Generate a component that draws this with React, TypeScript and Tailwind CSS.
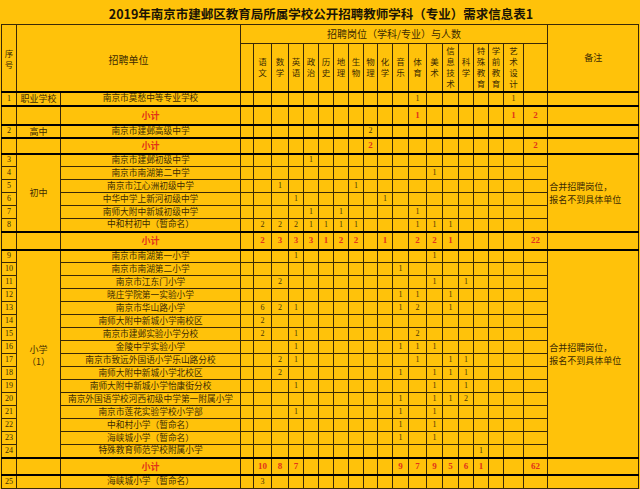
import React from "react";

const SUBJECTS = ["语文","数学","英语","政治","历史","地理","生物","物理","化学","音乐","体育","美术","信息技术","科学","特殊教育","学前教育","艺术设计"];
const SUBJ_W = ["w-[18px]","w-[17px]","w-[15px]","w-[15px]","w-[15px]","w-[15px]","w-[15px]","w-[14px]","w-[15px]","w-[16px]","w-[18px]","w-[16px]","w-[16px]","w-[15px]","w-[15px]","w-[15px]","w-[20px]"];

type Row = {
  n?: string;
  type?: { t: React.ReactNode; span: number };
  name?: string;
  v: Record<number, number>;
  total?: number;
  sub?: boolean;
  note?: { span: number; text?: boolean };
  thick?: boolean;
  h: string;
};

const NOTE = (
  <span className="block text-left pl-[1px] leading-[13px]">
    合并招聘岗位，<br />报名不到具体单位
  </span>
);

const rows: Row[] = [
  { n: "1", type: { t: "职业学校", span: 1 }, name: "南京市莫愁中等专业学校", v: { 10: 1, 16: 1 }, note: { span: 1 }, thick: true, h: "h-[14px]" },
  { sub: true, type: { t: "", span: 1 }, v: { 10: 1, 16: 1 }, total: 2, note: { span: 1 }, thick: true, h: "h-[19px]" },
  { n: "2", type: { t: "高中", span: 1 }, name: "南京市建邺高级中学", v: { 7: 2 }, note: { span: 1 }, thick: true, h: "h-[13px]" },
  { sub: true, type: { t: "", span: 1 }, v: { 7: 2 }, total: 2, note: { span: 1 }, thick: true, h: "h-[16px]" },
  { n: "3", type: { t: "初中", span: 6 }, name: "南京市建邺初级中学", v: { 3: 1 }, note: { span: 6, text: true }, thick: true, h: "h-[13px]" },
  { n: "4", name: "南京市南湖第二中学", v: { 11: 1 }, h: "h-[13px]" },
  { n: "5", name: "南京市江心洲初级中学", v: { 1: 1, 6: 1 }, h: "h-[13px]" },
  { n: "6", name: "中华中学上新河初级中学", v: { 2: 1, 8: 1 }, h: "h-[13px]" },
  { n: "7", name: "南师大附中新城初级中学", v: { 3: 1, 5: 1, 10: 1 }, h: "h-[13px]" },
  { n: "8", name: "中和村初中（暂命名）", v: { 0: 2, 1: 2, 2: 2, 3: 1, 4: 1, 5: 1, 6: 1, 10: 1, 11: 1, 12: 1 }, h: "h-[13px]" },
  { sub: true, type: { t: "", span: 1 }, v: { 0: 2, 1: 3, 2: 3, 3: 3, 4: 1, 5: 2, 6: 2, 8: 1, 10: 2, 11: 2, 12: 1 }, total: 22, note: { span: 1 }, thick: true, h: "h-[18px]" },
  { n: "9", type: { t: <span className="block leading-[12px] pt-[4px]">小学<br />（1）</span>, span: 16 }, name: "南京市南湖第一小学", v: { 2: 1, 11: 1 }, note: { span: 16, text: true }, thick: true, h: "h-[13px]" },
  { n: "10", name: "南京市南湖第二小学", v: { 9: 1 }, h: "h-[13px]" },
  { n: "11", name: "南京市江东门小学", v: { 1: 2, 11: 1, 13: 1 }, h: "h-[13px]" },
  { n: "12", name: "晓庄学院第一实验小学", v: { 9: 1, 10: 1, 12: 1 }, h: "h-[13px]" },
  { n: "13", name: "南京市华山路小学", v: { 0: 6, 1: 2, 2: 1, 9: 1, 10: 2, 12: 1 }, h: "h-[13px]" },
  { n: "14", name: "南师大附中新城小学南校区", v: { 0: 2 }, h: "h-[13px]" },
  { n: "15", name: "南京市建邺实验小学分校", v: { 0: 2, 2: 1, 10: 2 }, h: "h-[13px]" },
  { n: "16", name: "金陵中学实验小学", v: { 2: 1, 9: 1, 10: 1, 11: 1 }, h: "h-[13px]" },
  { n: "17", name: "南京市致远外国语小学乐山路分校", v: { 1: 2, 2: 1, 10: 1, 12: 1, 13: 1 }, h: "h-[13px]" },
  { n: "18", name: "南师大附中新城小学北校区", v: { 1: 2, 9: 1, 11: 1, 12: 1, 13: 1 }, h: "h-[13px]" },
  { n: "19", name: "南师大附中新城小学怡康街分校", v: { 2: 1, 11: 1, 13: 1 }, h: "h-[13px]" },
  { n: "20", name: "南京外国语学校河西初级中学第一附属小学", v: { 9: 1, 11: 1, 12: 1, 13: 2 }, h: "h-[13px]" },
  { n: "21", name: "南京市莲花实验学校小学部", v: { 2: 1, 9: 1, 11: 1 }, h: "h-[13px]" },
  { n: "22", name: "中和村小学（暂命名）", v: { 9: 1, 11: 1 }, h: "h-[13px]" },
  { n: "23", name: "海峡城小学（暂命名）", v: { 9: 1, 11: 1 }, h: "h-[13px]" },
  { n: "24", name: "特殊教育师范学校附属小学", v: { 14: 1 }, h: "h-[13px]" },
  { sub: true, type: { t: "", span: 1 }, v: { 0: 10, 1: 8, 2: 7, 9: 9, 10: 7, 11: 9, 12: 5, 13: 6, 14: 1 }, total: 62, note: { span: 1 }, thick: true, h: "h-[17px]" },
  { n: "25", type: { t: "", span: 1 }, name: "海峡城小学（暂命名）", v: { 0: 3 }, note: { span: 1 }, thick: true, h: "h-[14px]" },
];

const BORDER = "border border-[#3a2906] p-0 text-center align-middle";

export default function App() {
  return (
    <div className="min-h-screen w-[640px] bg-[#FFC20A] font-['Noto_Sans_CJK_SC',sans-serif] text-[#3d2b02] overflow-hidden">
      <div className="h-[24px] flex items-center justify-center pt-[4px] pl-[2px] text-[12.5px] font-bold text-[#1c1505] leading-none">
        2019年南京市建邺区教育局所属学校公开招聘教师学科（专业）需求信息表1
      </div>
      <table className="ml-px w-[637px] table-fixed border-collapse">
        <colgroup>
          <col className="w-[15px]" />
          <col className="w-[44px]" />
          <col className="w-[180px]" />
          <col className="w-[13px]" />
          {SUBJ_W.map((w, i) => (
            <col key={i} className={w} />
          ))}
          <col className="w-[24px]" />
          <col className="w-[91px]" />
        </colgroup>
        <thead>
          <tr className="h-[19px]">
            <th rowSpan={2} className={`${BORDER} font-normal text-[8.5px] leading-[11px] pt-[2px]`}>
              序<br />号
            </th>
            <th rowSpan={2} colSpan={2} className={`${BORDER} font-normal text-[10px] pt-[4px]`}>
              招聘单位
            </th>
            <th colSpan={19} className={`${BORDER} font-normal text-[10px] leading-none`}>
              招聘岗位（学科/专业）与人数
            </th>
            <th rowSpan={2} className={`${BORDER} font-normal text-[9px]`}>
              备注
            </th>
          </tr>
          <tr className="h-[48px]">
            <th className={BORDER}></th>
            {SUBJECTS.map((s, i) => (
              <th key={i} className={`${BORDER} font-normal text-[8.5px] leading-[11px]`}>
                {s.split("").map((c, j) => (
                  <span key={j} className="block">
                    {c}
                  </span>
                ))}
              </th>
            ))}
            <th className={BORDER}></th>
          </tr>
        </thead>
        <tbody>
          {rows.map((r, ri) => {
            const top = r.thick ? " border-t-2 border-t-black" : "";
            const numCls = r.sub
              ? "font-['Liberation_Serif',serif] font-bold text-[9px] text-[#e2331b] leading-none"
              : "font-['Liberation_Serif',serif] text-[8px] text-[#4a3504] leading-none";
            return (
              <tr key={ri} className={r.h}>
                <td className={`${BORDER}${top} font-['Liberation_Serif',serif] text-[8px] leading-none`}>{r.n ?? ""}</td>
                {r.type && (
                  <td rowSpan={r.type.span} className={`${BORDER}${top} text-[9px] leading-none`}>
                    {r.type.t}
                  </td>
                )}
                <td
                  className={`${BORDER}${top} leading-none whitespace-nowrap ${
                    r.sub ? "text-[9px] font-bold text-[#e2331b]" : "text-[8.7px]"
                  }`}
                >
                  {r.sub ? "小计" : r.name}
                </td>
                <td className={`${BORDER}${top}`}></td>
                {SUBJECTS.map((_, i) => (
                  <td key={i} className={`${BORDER}${top} ${numCls}`}>
                    {r.v[i] ?? ""}
                  </td>
                ))}
                <td className={`${BORDER}${top} ${numCls}`}>{r.total ?? ""}</td>
                {r.note && (
                  <td rowSpan={r.note.span} className={`${BORDER}${top} text-[9px] leading-none`}>
                    {r.note.text ? NOTE : ""}
                  </td>
                )}
              </tr>
            );
          })}
        </tbody>
      </table>
    </div>
  );
}
